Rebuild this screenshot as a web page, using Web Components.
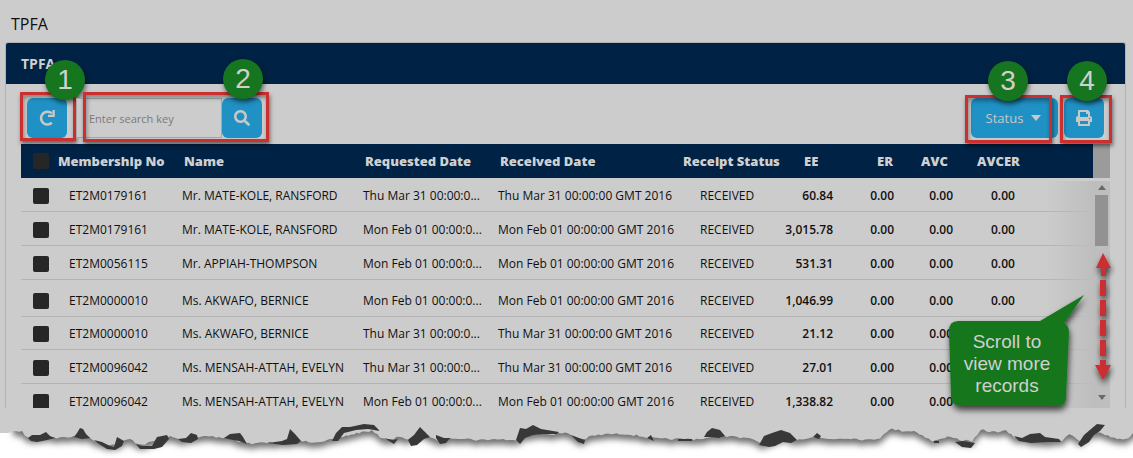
<!DOCTYPE html>
<html lang="en"><head><meta charset="utf-8"><title>TPFA</title>
<style>
html{background:#fff}
body{margin:0;font-family:"Open Sans","Noto Sans",sans-serif;color:#101010}
</style></head><body>
<tpfa-page></tpfa-page>
<script>
const define=(name,html,setup)=>{
  const t=document.createElement('template');t.innerHTML=html;
  customElements.define(name,class extends HTMLElement{
    connectedCallback(){
      if(this.shadowRoot)return;
      this.attachShadow({mode:'open'}).append(t.content.cloneNode(true));
      if(setup)setup(this,this.shadowRoot);
    }
  });
};

define('step-mark',`<style>
:host{display:flex;position:relative}
.frame{position:absolute;inset:var(--frame);border:3px solid #cc2f30;box-shadow:1px 3px 4px rgba(0,0,0,.5),inset 1px 3px 4px rgba(0,0,0,.35);pointer-events:none}
.badge{position:absolute;top:var(--badge-top);left:var(--badge-left);width:40px;height:40px;border-radius:50%;background:#15761f;color:#d0d0d0;font:28px/40px "Liberation Sans",Arial,sans-serif;text-align:center;box-shadow:1px 3px 5px rgba(0,0,0,.55);pointer-events:none}
</style><slot></slot><span class="frame"></span><span class="badge"></span>`,
(el,r)=>{r.querySelector('.badge').textContent=el.getAttribute('number')});

define('tool-button',`<style>
:host{display:block}
button{display:flex;align-items:center;justify-content:center;gap:8px;box-sizing:border-box;min-width:40px;height:40px;padding:0;border:0;border-radius:6px;background:#2091c4;color:#c8c8c8;font:13px/20px "Open Sans",sans-serif}
:host([wide]) button{width:87px;padding-right:2px}
</style><button type="button"><slot></slot></button>`,
(el,r)=>{r.querySelector('button').setAttribute('aria-label',el.getAttribute('label'))});

define('search-field',`<style>
:host{display:flex}
input{box-sizing:border-box;width:146px;height:40px;border:1px solid #a6a6a6;background:#ccc;padding:0 12px;margin:0;font:11px/16px "Open Sans",sans-serif;color:#333;border-radius:0}
input::placeholder{color:#7a7a7a;opacity:1}
</style><input type="text" aria-label="Search key" placeholder="Enter search key">
<tool-button label="Search"><svg width="16" height="16" viewBox="0 0 512 512" fill="currentColor"><path d="M505 442.700 405.300 343c-4.500-4.500-10.600-7-17-7H372c27.600-35.300 44-79.700 44-128C416 93.100 322.900 0 208 0S0 93.100 0 208s93.100 208 208 208c48.300 0 92.700-16.400 128-44v16.300c0 6.400 2.500 12.500 7 17l99.700 99.700c9.400 9.400 24.600 9.400 33.900 0l28.300-28.300c9.400-9.400 9.400-24.600.1-34zM208 336c-70.700 0-128-57.200-128-128 0-70.700 57.200-128 128-128 70.700 0 128 57.200 128 128 0 70.700-57.200 128-128 128z"/></svg></tool-button>`);

define('record-table',`<style>
:host{display:flex;position:relative;overflow:hidden}
.main{flex:1;min-width:0;overflow:hidden}
table{width:100%;border-collapse:separate;border-spacing:0;table-layout:fixed}
th,td{padding:0;white-space:nowrap;text-align:left;box-sizing:border-box}
th{height:34px;background:#002244;color:#d0d0d0;font-size:13px;line-height:18px;font-weight:800}
td{height:34px;padding-top:2px;border-bottom:1px solid #b4b4b4;font-size:12px;line-height:18px}
tr.tall td{height:37px;padding-top:6px}
tr.short td{height:33px}
td:nth-child(1),th:nth-child(1){padding-left:12px}
th:nth-child(2){padding-left:5px} td:nth-child(2){padding-left:16px}
th:nth-child(n+3):nth-child(-n+5){padding-left:8px}
td:nth-child(n+3):nth-child(-n+5){padding-left:6px}
th:nth-child(6){padding-left:7px} td:nth-child(6){padding-left:24px}
th:nth-child(7){padding-left:24px} th:nth-child(8){padding-left:36px}
th:nth-child(9){padding-left:19px} th:nth-child(10){padding-left:16px}
td:nth-child(n+7){text-align:right;padding-right:8px;font-weight:600}
td:nth-child(10){text-align:left;padding-left:30px}
input{appearance:none;display:block;width:16px;height:16px;margin:0;background:#262626;border-radius:2px}
.fade{position:absolute;right:17px;top:37px;bottom:0;width:48px;background:linear-gradient(90deg,rgba(190,190,190,0),#bebebe)}
.bar{display:flex;flex-direction:column;width:17px;background:#bebebe}
.corner{height:34px;background:#9b9b9b}
.strip{height:3px;background:#ccc}
.track{flex:1;display:flex;flex-direction:column;align-items:center;padding:4px 0 8px}
.thumb{width:13px;height:51px;margin-top:5px;background:#929292}
.down{margin-top:auto}
</style>
<div class="main"><table><colgroup><col style="width:32px"><col style="width:123px"><col style="width:181px"><col style="width:135px"><col style="width:184px"><col style="width:104px"><col style="width:61px"><col style="width:61px"><col style="width:59px"><col></colgroup>
<thead><tr><th><input type="checkbox" aria-label="Select all"></th><th>Membership No</th><th>Name</th><th>Requested Date</th><th>Received Date</th><th>Receipt Status</th><th>EE</th><th>ER</th><th>AVC</th><th>AVCER</th></tr></thead><tbody></tbody></table></div>
<div class="fade"></div>
<div class="bar"><div class="corner"></div><div class="strip"></div><div class="track">
<svg width="8" height="5"><path d="M0 5 4 0l4 5z" fill="#6a6a6a"/></svg><div class="thumb"></div>
<svg class="down" width="8" height="5"><path d="M0 0h8L4 5z" fill="#6a6a6a"/></svg></div></div>`,
(el,r)=>{
  const T='Thu Mar 31 00:00:0',M='Mon Feb 01 00:00:0';
  const rows=[['ET2M0179161','Mr. MATE-KOLE, RANSFORD',T,'60.84'],['ET2M0179161','Mr. MATE-KOLE, RANSFORD',M,'3,015.78'],
  ['ET2M0056115','Mr. APPIAH-THOMPSON',M,'531.31'],['ET2M0000010','Ms. AKWAFO, BERNICE',M,'1,046.99'],
  ['ET2M0000010','Ms. AKWAFO, BERNICE',T,'21.12'],['ET2M0096042','Ms. MENSAH-ATTAH, EVELYN',T,'27.01'],
  ['ET2M0096042','Ms. MENSAH-ATTAH, EVELYN',M,'1,338.82']];
  r.querySelector('tbody').innerHTML=rows.map((d,i)=>`<tr class="${i===3?'tall':i===4?'short':''}"><td><input type="checkbox" aria-label="Select ${d[1]}"></td><td>${d[0]}</td><td>${d[1]}</td><td>${d[2]}...</td><td>${d[2]}0 GMT 2016</td><td>RECEIVED</td><td>${d[3]}</td><td>0.00</td><td>0.00</td><td>0.00</td></tr>`).join('');
});

define('scroll-note',`<style>
:host{display:block;position:relative;width:168px;height:160px}
svg{position:absolute;inset:0;overflow:visible}
p{position:absolute;left:0;top:78px;width:116px;margin:0;text-align:center;color:#d0d0d0;font:19px/22px "Liberation Sans",Arial,sans-serif}
</style><svg width="168" height="160"><defs><filter id="s" x="-20%" y="-20%" width="150%" height="150%"><feDropShadow dx="1" dy="4" stdDeviation="3" flood-opacity=".7"/></filter></defs>
<path filter="url(#s)" fill="#15761f" d="M9 68H91L135 42 115 70Q120 73 120 79L117 144Q117 153 108 153H12Q3 153 2 144L0 78Q0 68 9 68Z"/>
<g filter="url(#s)" fill="#cc2f30"><path d="M154 0l8 15h-5v8h-5v-8h-5zM151 27h6v16h-6zM151 47h6v16h-6zM151 67h6v16h-6zM151 87h6v16h-6zM151 107h6v5h5l-8 15-8-15h5z"/></g></svg>
<p>Scroll to<br>view more<br>records</p>`);

define('torn-edge',`<style>
:host{display:block;height:50px}
svg{display:block;width:100%;height:50px}
</style><svg viewBox="0 0 1133 50" preserveAspectRatio="none" aria-hidden="true"><defs>
<filter id="b" x="-2%" y="-40%" width="104%" height="200%"><feGaussianBlur stdDeviation="3"/></filter>
<clipPath id="c"><rect width="1133" height="50"/></clipPath></defs>
<g clip-path="url(#c)"><path class="shade" fill="#707070" filter="url(#b)"/><path class="paper" fill="#ccc"/><path class="dark" fill="#383838"/></g></svg>`,
(el,r)=>{
  const edge=[[0,25],[8,25],[14,23],[22,24],[28,30],[36,30],[48,28],[57,30],[67,29],[77,29],[88,29],[96,33],[106,36],[116,37],[122,34],[130,31],[138,36],[145,36],[152,34],[160,30],[170,29],[184,32],[196,30],[206,28],[216,29],[230,30],[242,34],[252,36],[264,34],[276,35],[288,34],[300,33],[312,34],[324,33],[336,31],[346,28],[354,26],[362,24],[372,23],[380,29],[390,32],[400,28],[408,32],[416,27],[424,25],[432,31],[441,33],[452,30],[462,30],[476,32],[500,31],[516,33],[524,27],[540,26],[556,26],[568,25],[580,33],[592,28],[608,26],[628,26],[645,29],[660,31],[675,31],[700,31],[715,29],[730,28],[740,30],[753,31],[762,36],[774,33],[784,29],[796,32],[812,29],[828,31],[848,30],[868,32],[880,30],[884,25],[892,21],[902,23],[914,23],[922,27],[932,33],[942,31],[950,28],[960,32],[972,33],[977,28],[981,22],[992,24],[1006,23],[1014,29],[1030,32],[1046,33],[1062,33],[1069,26],[1080,33],[1091,26],[1100,24],[1108,28],[1120,31],[1128,30],[1133,25]];
  // deterministic roughness along the torn line
  let seed=7;const rnd=()=>(seed=(seed*16807)%2147483647)/2147483647;
  const pts=[];
  for(let i=0;i<edge.length-1;i++){const[a,b]=edge[i],[c,d]=edge[i+1];const n=Math.max(1,Math.round((c-a)/3));
    for(let k=0;k<n;k++)pts.push([a+(c-a)*k/n,b+(d-b)*k/n+(a>20?rnd()*2-1:0)]);}
  pts.push([1133,25]);
  const line=(dy,f=v=>v)=>'M-20 -20V'+(25+dy)+'L'+pts.map(p=>p[0].toFixed(1)+' '+(f(p[1],p[0])+dy).toFixed(1)).join('L')+'L1153 '+(25+dy)+'V-20Z';
  r.querySelector('.paper').setAttribute('d',line(0));
  // the shadow keeps clear of the flat stretch at the far left
  r.querySelector('.shade').setAttribute('d',line(5,(v,x)=>x<12?v-14:v));
  r.querySelector('.dark').setAttribute('d',`M28 30l4-3 8 0 6-3 4 4 5 2-8 2-10 2-6-1z
M74 29l3-4 3-5 3 1 3 5 4 4-8 1z M94 32l8 2 8 4 4 1 3-10 7 4-2 5-7 4-8-1-8-5z M136 36l6 2 10 0 5-9 10-2 2 4-7 8-8 2-14 0z
M178 31l8-1 5-5 6 2 1 4-7 4-9-1z M224 30l6-4 10-1 3 4 4 7-8-3-6-1z M268 35l14-2 5-2 3-10 5 5 6 7-4 3-14 1z
M332 33l4-8 6-6 8 0 14-3 10 1 6 6-12-2-12 1-12 3-6 8z M384 30l8 2 6-1-4 5z M408 32l6-5 6-8 5 5 5 5-6 2-7 6-6 1z M436 30l0-3 8 3 6 0-4 5-6 1z
M516 32l4-12 6 1 7-4 8 4 18 3-2 2-14 0-10 1-8 3-5 6z M571 27l8 3 6 2-1 4-6-2z M647 30l4-3 3 6z M678 31h14v2h-14z
M704 29l3-5 5-4 8 2 5 6-6 2-8-1z M759 37l5-9 8-3 9-3 9 3 7 7-6 3-8-1-8 4-6 1z M813 29l4-4 4 3-2 3z
M934 33h5v2h-5z M955 34l8-1 12 2-4 5-9-1z M1014 28l8 2 8-4 10-1 5 4 14 2 2 3-14 0-16 1-12-2z M1078 36l6-9 7-6 6-5 8 1-5 6-6 4-5 7-8 5z`);
});

define('tpfa-page',`<style>
:host{display:block;position:relative}
.desk{background:#ccc;padding:0 7px 0 5px}
h1{margin:0;padding:12px 6px 6px;font-size:16px;line-height:24px;font-weight:400}
.panel{position:relative;display:flex;flex-direction:column;height:366px;box-sizing:border-box;border:1px solid #b2b2b2;border-bottom:0;border-radius:3px 3px 0 0;overflow:hidden}
h2{margin:0;background:#002244;color:#d0d0d0;padding:0 15px;font-size:14px;line-height:41px;font-weight:700}
.tools{display:flex;padding:14px 21px 6px;gap:9px;position:relative;z-index:1}
.gap{flex:1}
.one{--frame:-6px -9px -3px -7px;--badge-top:-38px;--badge-left:18px}
.two{--frame:-6px -7px -4px 7px;--badge-top:-39px;--badge-left:147px}
.three{--frame:-3px 6px -5px -6px;--badge-top:-37px;--badge-left:17px}
.four{--frame:-3px -8px -5px -4px;--badge-top:-37px;--badge-left:3px}
.right{display:flex;gap:6px}
record-table{margin:0 15px;flex:1;min-height:0}
scroll-note{position:absolute;right:16px;top:253px}
</style>
<main class="desk"><h1>TPFA</h1><section class="panel"><h2>TPFA</h2>
<div class="tools">
<step-mark number="1" class="one"><tool-button label="Refresh"><svg width="16" height="16" viewBox="0 0 16 16"><path d="M12.800 12.800A6.400 6.400 0 1 1 12.800 3.400" fill="none" stroke="currentColor" stroke-width="2.600"/><path d="M15.800 0v7H9V4.800h4.400V0z" fill="currentColor"/></svg></tool-button></step-mark>
<step-mark number="2" class="two"><search-field></search-field></step-mark>
<span class="gap"></span><div class="right">
<step-mark number="3" class="three"><tool-button wide label="Status">Status <svg width="10" height="6"><path d="M0 0h10L5 6z" fill="currentColor"/></svg></tool-button></step-mark>
<step-mark number="4" class="four"><tool-button label="Print"><svg width="16" height="16" viewBox="0 0 512 512" fill="currentColor"><path d="M448 192V77.250c0-8.490-3.370-16.620-9.370-22.630L393.370 9.370c-6-6-14.140-9.370-22.630-9.370H96C78.330 0 64 14.330 64 32v160c-35.350 0-64 28.650-64 64v112c0 8.840 7.160 16 16 16h48v96c0 17.670 14.330 32 32 32h320c17.670 0 32-14.330 32-32v-96h48c8.840 0 16-7.160 16-16V256c0-35.350-28.650-64-64-64zM384 448H128v-96h256v96zm0-224H128V64h192v48c0 8.840 7.160 16 16 16h48v96zm48 72c-13.250 0-24-10.750-24-24s10.750-24 24-24 24 10.750 24 24-10.750 24-24 24z"/></svg></tool-button></step-mark>
</div></div><record-table></record-table></section></main>
<scroll-note></scroll-note><torn-edge></torn-edge>`);
</script></body></html>
